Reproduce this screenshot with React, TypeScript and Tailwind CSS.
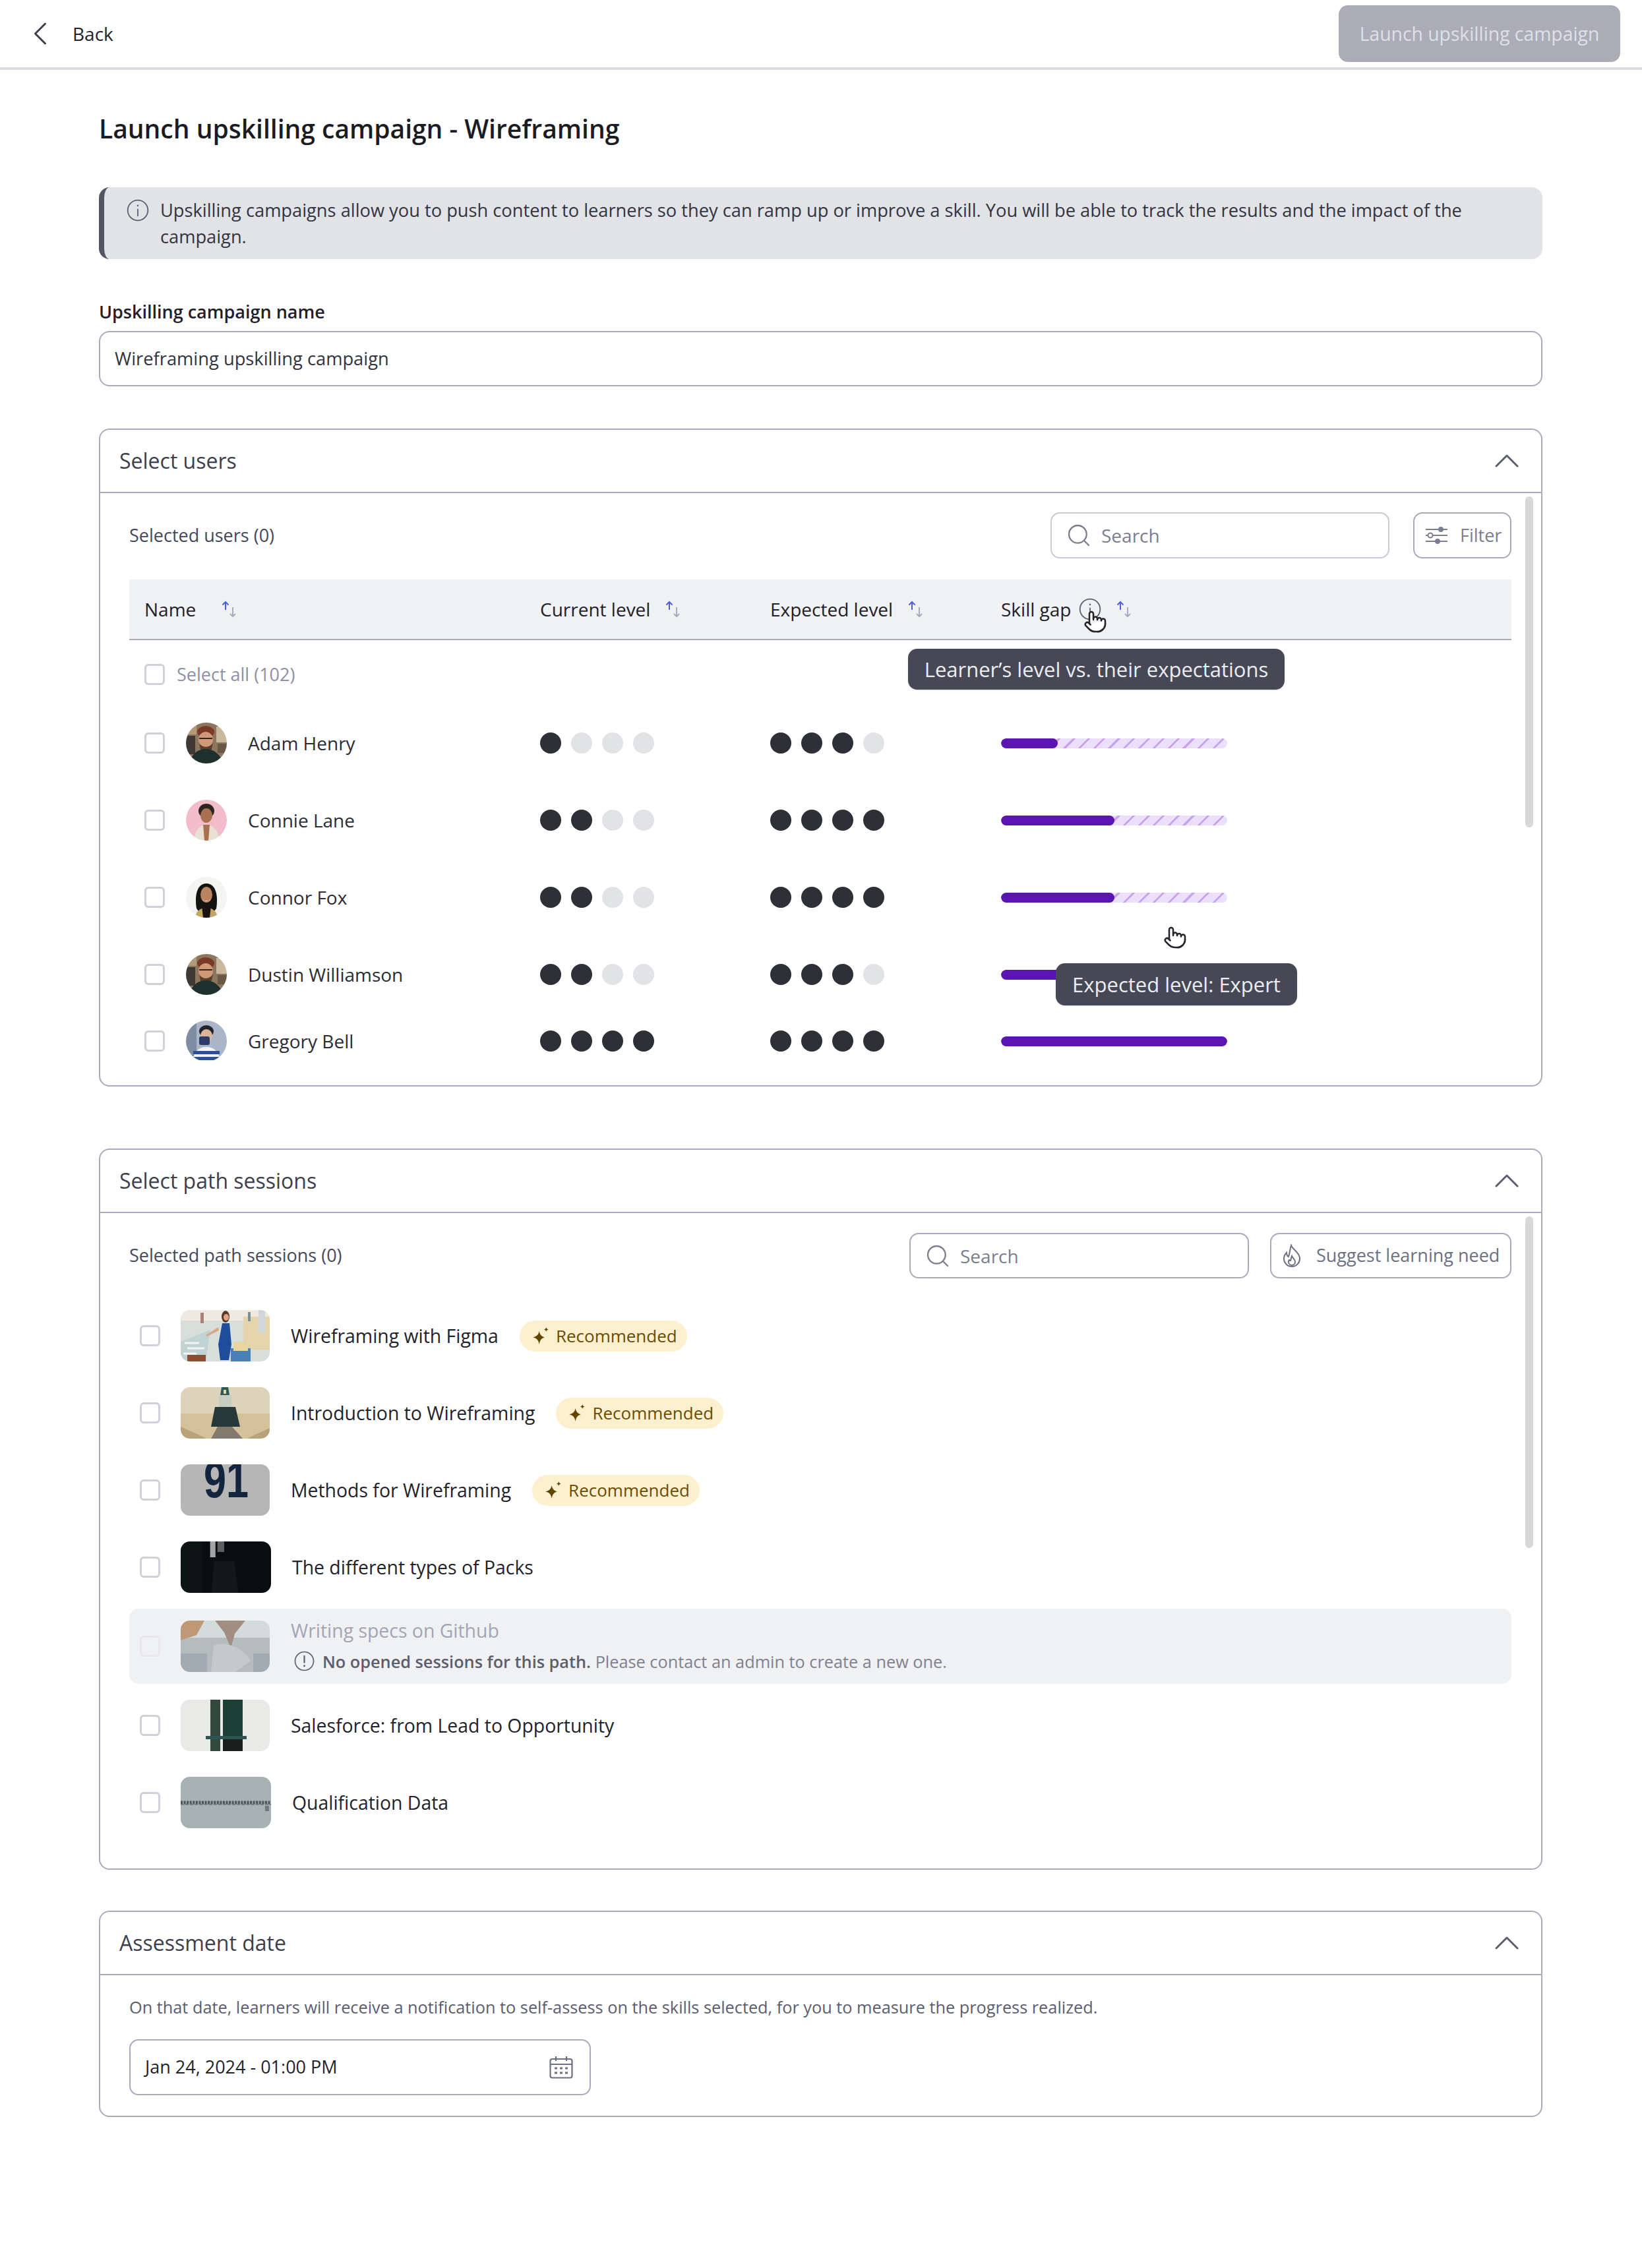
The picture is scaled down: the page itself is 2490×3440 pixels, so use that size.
import { ChevronLeft, ChevronUp, Pointer, Search } from 'lucide-react';

function InfoIcon({ className, mark = 'i' }: { className: string; mark?: 'i' | '!' }) {
  return (
    <svg viewBox="0 0 24 24" fill="none" stroke="currentColor" strokeWidth="1.2" strokeLinecap="round" className={className}>
      <circle cx="12" cy="12" r="10.2" />
      {mark === 'i' ? (
        <>
          <path d="M12 11v6.5" />
          <path d="M12 7.200v.2" strokeWidth="1.600" />
        </>
      ) : (
        <>
          <path d="M12 6.500v7" strokeWidth="1.600" />
          <path d="M12 17.200v.2" strokeWidth="2" />
        </>
      )}
    </svg>
  );
}

function SortIcon() {
  return (
    <svg viewBox="0 0 25 26" fill="none" strokeWidth="2" className="h-[26px] w-[25px] shrink-0">
      <path d="M7 14V2M2.500 6.500 7 2l4.500 4.500" stroke="#4a62d8" />
      <path d="M18 10v14M14 20l4 4 4-4" stroke="#a9abbd" />
    </svg>
  );
}

function FilterIcon() {
  return (
    <svg viewBox="0 0 34 30" fill="none" stroke="#7c7e90" strokeWidth="2" className="h-[30px] w-[34px] shrink-0">
      <path d="M1 6h33M1 15h33M1 24h33" />
      <circle cx="24" cy="6" r="3" fill="#7c7e90" />
      <circle cx="8" cy="15" r="3.500" fill="#fff" />
      <circle cx="19" cy="24" r="3" fill="#7c7e90" />
    </svg>
  );
}

function FlameIcon() {
  return (
    <svg viewBox="0 0 28 36" fill="none" stroke="#6d6f82" strokeWidth="2" strokeLinecap="round" className="h-[36px] w-[28px] shrink-0">
      <path d="M13 2c1 5 12 10 13 19a12 12 0 0 1-12 13A12 12 0 0 1 2 22c0-4 2-7 4-9 0 3 1 5 3 6 2-5 2-11 4-17Z" />
      <path d="M14 18c1 3 5 5 5 9a5 5 0 0 1-10 0c0-1 0-2 1-3 1 1 2 1 2 1 1-2 1-5 2-7Z" />
    </svg>
  );
}

function SparkleIcon() {
  return (
    <svg viewBox="1 0 22 22" fill="#5f4500" className="h-[26px] w-[26px] shrink-0">
      <path d="M10 5c.8 4 2.600 6.600 7 8-4.400 1.400-6.200 4-7 9-.8-5-2.600-7.600-8-9 5.400-1.400 7.200-4 8-8Z" />
      <path d="M19 0c.3 1.700 1 2.500 3 3-2 .5-2.700 1.300-3 3-.3-1.700-1-2.500-3-3 2-.5 2.700-1.300 3-3Z" />
    </svg>
  );
}

function CalendarIcon() {
  return (
    <svg viewBox="0 0 36 34" fill="none" stroke="#6d6f82" strokeWidth="2.200" className="h-[34px] w-[36px] shrink-0">
      <rect x="1.500" y="4" width="33" height="28.500" rx="3" />
      <path d="M1.500 12h33M10 0v7M26 0v7" />
      <path d="M8 18h4M16 18h4M24 18h4M8 25h4M16 25h4M24 25h4" strokeWidth="3" />
    </svg>
  );
}

function Checkbox({ faded = false }: { faded?: boolean }) {
  return (
    <span className={`block h-[32px] w-[31px] shrink-0 rounded-[6px] border-[3px] ${faded ? 'border-[#e7e7ec] bg-transparent' : 'border-[#cfd0da] bg-white'}`} />
  );
}

function Hand({ className }: { className: string }) {
  return (
    <span className={`absolute ${className}`}>
      <Pointer size={36} fill="#ffffff" stroke="#24252c" strokeWidth={1.7} />
    </span>
  );
}

function Tooltip({ text, className }: { text: string; className: string }) {
  return (
    <div className={`absolute flex items-center justify-center rounded-[14px] bg-[#464856] text-[31px] text-[#ecedf0] shadow-sm ${className}`}>
      {text}
    </div>
  );
}

function Section({ title, children }: { title: string; children: React.ReactNode }) {
  return (
    <section className="relative rounded-[16px] border-2 border-[#a9abbd]">
      <div className="flex h-[96px] items-center justify-between border-b-2 border-[#a9abbd] pl-[29px] pr-[20px]">
        <h2 className="text-[32px] font-medium text-[#3d3f4d]">{title}</h2>
        <ChevronUp size={64} strokeWidth={1.1} color="#5c5e70" />
      </div>
      {children}
    </section>
  );
}

function Avatar({ kind }: { kind: 'adam' | 'connie' | 'connor' | 'gregory' }) {
  const shapes = {
    adam: (
      <>
        <rect width="62" height="62" fill="#8c7660" />
        <rect x="0" y="20" width="14" height="28" fill="#3e3a33" />
        <rect x="46" y="6" width="16" height="24" fill="#c9b89d" />
        <rect x="4" y="4" width="12" height="14" fill="#b59a78" />
        <rect x="48" y="32" width="14" height="14" fill="#6a5846" />
        <ellipse cx="30" cy="14" rx="13" ry="9" fill="#7a3a26" />
        <ellipse cx="30" cy="26" rx="11" ry="12" fill="#d09a78" />
        <path d="M20 24h20" stroke="#33261f" strokeWidth="2" />
        <path d="M20 30c3 9 17 9 21 0l-2 11H22Z" fill="#5b3e2c" />
        <path d="M6 62c2-16 14-22 24-22s22 6 26 22Z" fill="#1f2f2b" />
      </>
    ),
    connie: (
      <>
        <rect width="62" height="62" fill="#f3bccb" />
        <ellipse cx="31" cy="17" rx="12" ry="11" fill="#2f2520" />
        <ellipse cx="31" cy="24" rx="9" ry="11" fill="#a8704f" />
        <path d="M12 62c1-16 9-24 19-24s18 8 20 24Z" fill="#e8e0d2" />
        <path d="M26 38h10l-2 24h-6Z" fill="#a8704f" />
      </>
    ),
    connor: (
      <>
        <rect width="62" height="62" fill="#f4f4f3" />
        <path d="M16 48c-3-18 0-38 15-38s18 20 15 38l-6 8H22Z" fill="#15130f" />
        <ellipse cx="31" cy="27" rx="9" ry="12" fill="#b9835f" />
        <path d="M24 33c3 5 11 5 14 0l-2 3h-10Z" fill="#f7f3ee" />
        <path d="M14 62c1-8 5-12 10-14h14c5 2 9 6 10 14Z" fill="#c2a763" />
        <path d="M24 44h14l-2 18H26Z" fill="#17140f" />
      </>
    ),
    gregory: (
      <>
        <rect width="62" height="62" fill="#aab5c8" />
        <rect x="0" y="0" width="16" height="62" fill="#7f8ca3" />
        <ellipse cx="31" cy="16" rx="11" ry="9" fill="#23252e" />
        <ellipse cx="31" cy="23" rx="9" ry="10" fill="#dbb49a" />
        <rect x="20" y="24" width="16" height="13" rx="3" fill="#2b3a66" />
        <path d="M10 62c1-14 9-22 21-22s20 8 21 22Z" fill="#f2f3f6" />
        <path d="M11 46h40v5H11ZM10 55h42v5H10Z" fill="#2a4f9c" />
      </>
    ),
  };
  return (
    <span className="block h-[62px] w-[62px] shrink-0 overflow-hidden rounded-full">
      <svg viewBox="0 0 62 62" className="h-full w-full blur-[0.6px]">
        {shapes[kind]}
      </svg>
    </span>
  );
}

function Dots({ filled }: { filled: number }) {
  return (
    <div className="flex gap-[15px]">
      {[0, 1, 2, 3].map((i) => (
        <span key={i} className={`h-[32px] w-[32px] rounded-full ${i < filled ? 'bg-[#2e3038]' : 'bg-[#e2e3e7]'}`} />
      ))}
    </div>
  );
}

function SkillBar({ percent }: { percent: number }) {
  return (
    <div className="h-[15px] w-[343px] overflow-hidden rounded-full bg-[repeating-linear-gradient(135deg,#ecdffb_0,#ecdffb_13px,#c6a4ee_13px,#c6a4ee_16px)]">
      <div className="h-full rounded-full bg-[#5a14b0]" style={{ width: `${percent}%` }} />
    </div>
  );
}

const users = [
  { name: 'Adam Henry', avatar: 'adam', current: 1, expected: 3, gap: 25 },
  { name: 'Connie Lane', avatar: 'connie', current: 2, expected: 4, gap: 50 },
  { name: 'Connor Fox', avatar: 'connor', current: 2, expected: 4, gap: 50 },
  { name: 'Dustin Williamson', avatar: 'adam', current: 2, expected: 3, gap: 50 },
  { name: 'Gregory Bell', avatar: 'gregory', current: 4, expected: 4, gap: 100 },
] as const;

function HeaderCell({ label, children }: { label: string; children?: React.ReactNode }) {
  return (
    <div className="flex items-center gap-[22px] text-[28px] font-medium text-[#1f2029]">
      <span>{label}</span>
      {children}
    </div>
  );
}

function UsersTable() {
  return (
    <div className="relative mt-[31px]">
      <div className="grid h-[92px] grid-cols-[600px_349px_350px_1fr] items-center border-b-2 border-[#a9abbd] bg-[#f0f1f3] pl-[23px]">
        <div className="flex items-center gap-[38px] text-[28px] font-medium text-[#1f2029]">
          <span>Name</span>
          <SortIcon />
        </div>
        <HeaderCell label="Current level">
          <SortIcon />
        </HeaderCell>
        <HeaderCell label="Expected level">
          <SortIcon />
        </HeaderCell>
        <div className="flex items-center text-[28px] font-medium text-[#1f2029]">
          <span>Skill gap</span>
          <InfoIcon className="ml-[11px] mr-[21px] h-[36px] w-[36px] text-[#5c5e70]" />
          <SortIcon />
        </div>
      </div>
      <div className="flex h-[104px] items-center gap-[18px] pl-[23px] text-[27px] text-[#8e90a3]">
        <Checkbox />
        <span>Select all (102)</span>
      </div>
      <div className="flex flex-col gap-[13px]">
        {users.map((user, i) => (
          <div
            key={user.name}
            className={`grid grid-cols-[600px_349px_350px_1fr] items-center pl-[23px] ${i === 4 ? 'h-[72px]' : 'h-[104px]'}`}
          >
            <div className="flex items-center text-[28px] font-medium text-[#2b2d36]">
              <Checkbox />
              <span className="ml-[32px] mr-[32px]">
                <Avatar kind={user.avatar} />
              </span>
              <span>{user.name}</span>
            </div>
            <Dots filled={user.current} />
            <Dots filled={user.expected} />
            <SkillBar percent={user.gap} />
          </div>
        ))}
      </div>
      <Tooltip text="Learner’s level vs. their expectations" className="left-[1181px] top-[105px] h-[62px] w-[571px]" />
      <Tooltip text="Expected level: Expert" className="left-[1405px] top-[582px] h-[64px] w-[366px]" />
      <Hand className="left-[1447px] top-[46px]" />
      <Hand className="left-[1568px] top-[525px]" />
    </div>
  );
}

function Thumb({ children, wide = false }: { children: React.ReactNode; wide?: boolean }) {
  return (
    <span className={`block h-[78px] shrink-0 overflow-hidden rounded-[14px] ${wide ? 'w-[137px]' : 'w-[135px]'}`}>
      <svg viewBox="0 0 135 78" preserveAspectRatio="none" className="h-full w-full blur-[0.7px]">
        {children}
      </svg>
    </span>
  );
}

const sessions = [
  {
    title: 'Wireframing with Figma',
    recommended: true,
    thumb: (
      <>
        <rect width="135" height="78" fill="#d8dfda" />
        <rect width="135" height="16" fill="#efe9df" />
        <rect x="95" y="10" width="40" height="50" fill="#e6d3ac" />
        <path d="M0 48 45 30 38 78H0Z" fill="#c2d3d3" />
        <path d="M6 50h22M10 58h26M4 66h20" stroke="#f2f4f2" strokeWidth="3" />
        <rect x="30" y="4" width="5" height="16" fill="#a9817a" />
        <rect x="102" y="3" width="4" height="14" fill="#7d8f96" />
        <rect x="118" y="0" width="10" height="34" fill="#cfd6da" />
        <ellipse cx="68" cy="10" rx="6" ry="9" fill="#5b3826" />
        <ellipse cx="69" cy="11" rx="4" ry="5" fill="#d9a68a" />
        <path d="M63 20h11l3 32-4 24H60l-3-24Z" fill="#1f4d9e" />
        <path d="M57 26 38 38l2 2 18-9Z" fill="#d9a68a" />
        <path d="M76 58h30v20H76Z" fill="#4a7fb8" />
        <path d="M80 48h22v14H80Z" fill="#e9d5a0" />
        <path d="M10 68h28v10H10Z" fill="#8e4c32" />
      </>
    ),
  },
  {
    title: 'Introduction to Wireframing',
    recommended: true,
    thumb: (
      <>
        <rect width="135" height="78" fill="#ddd2ba" />
        <path d="M0 40h135v38H0Z" fill="#d3c19b" />
        <path d="M0 60 40 78H0ZM135 62 100 78h35Z" fill="#b9a27a" />
        <path d="M62 0h10l2 12H60Z" fill="#2c5a58" />
        <rect x="58" y="12" width="19" height="18" fill="#c7cdbf" />
        <path d="M52 30h31l7 30H46Z" fill="#27383a" />
        <path d="M56 60h22l16 18H46Z" fill="#827a6c" />
        <rect x="65" y="4" width="4" height="6" fill="#e9d49a" />
      </>
    ),
  },
  {
    title: 'Methods for Wireframing',
    recommended: true,
    thumb: (
      <>
        <rect width="135" height="78" fill="#b6b6b7" />
        <text x="35" y="50" textLength="68" lengthAdjust="spacingAndGlyphs" fontFamily="'Liberation Sans', sans-serif" fontWeight="700" fontSize="78" fill="#13243f">91</text>
      </>
    ),
  },
  {
    title: 'The different types of Packs',
    wide: true,
    thumb: (
      <>
        <rect width="135" height="78" fill="#0a0d0f" />
        <rect x="44" y="0" width="8" height="24" fill="#a2a6a6" />
        <rect x="55" y="0" width="10" height="16" fill="#5c6060" />
        <path d="M50 30h30l6 48H46Z" fill="#15181b" />
        <path d="M0 0h32v78H0Z" fill="#0d1416" />
      </>
    ),
  },
  {
    title: 'Writing specs on Github',
    disabled: true,
    thumb: (
      <>
        <rect width="135" height="78" fill="#a7b0b2" />
        <rect width="135" height="26" fill="#ccd6d6" />
        <path d="M0 0h36L24 22 0 30Z" fill="#b38458" />
        <path d="M52 0h46L82 20l-6 22-10-24Z" fill="#8f7566" />
        <path d="M50 38c20-8 46 4 56 24l-24 16H46Z" fill="#bcbfbf" />
        <path d="M0 50h40v28H0ZM110 50h25v28h-25Z" fill="#8e9aa1" />
      </>
    ),
  },
  {
    title: 'Salesforce: from Lead to Opportunity',
    thumb: (
      <>
        <rect width="135" height="78" fill="#e9e9e7" />
        <rect x="45" y="0" width="15" height="78" fill="#33483f" />
        <rect x="64" y="0" width="30" height="78" fill="#1c3f36" />
        <rect x="38" y="55" width="62" height="5" fill="#2b5654" />
        <path d="M64 60h30v18H64Z" fill="#1a1f1d" />
      </>
    ),
  },
  {
    title: 'Qualification Data',
    wide: true,
    thumb: (
      <>
        <rect width="137" height="78" fill="#a6b2b4" />
        <path d="M0 39h135" stroke="#4e5557" strokeWidth="5" strokeDasharray="3 1.500" />
        <path d="M0 42h135" stroke="#757e80" strokeWidth="2" strokeDasharray="5 2" />
        <rect x="126" y="44" width="6" height="8" fill="#6f7a7c" />
      </>
    ),
  },
];

function Recommended() {
  return (
    <span className="flex h-[47px] w-[254px] shrink-0 items-center gap-[10px] rounded-full bg-[#fdf0cf] pl-[19px] text-[26px] font-medium text-[#6a4c00]">
      <SparkleIcon />
      Recommended
    </span>
  );
}

function SessionRow({ session }: { session: (typeof sessions)[number] }) {
  if (session.disabled) {
    return (
      <div className="-my-[15px] flex h-[114px] items-center rounded-[14px] bg-[#f0f1f3] pl-[16px]">
        <Checkbox faded />
        <span className="ml-[31px] mr-[32px] opacity-80">
          <Thumb>{session.thumb}</Thumb>
        </span>
        <div className="pb-[4px]">
          <div className="text-[28.400px] font-medium leading-[40px] text-[#a3a5b5]">{session.title}</div>
          <div className="mt-[9px] flex items-center gap-[11px] text-[25.300px] leading-[36px] text-[#7f8190]">
            <InfoIcon className="ml-[4px] h-[33px] w-[33px] text-[#5c5e70]" mark="!" />
            <span>
              <span className="font-semibold text-[#5c5e6e]">No opened sessions for this path.</span> Please contact an admin to create a new one.
            </span>
          </div>
        </div>
      </div>
    );
  }
  return (
    <div className="flex h-[78px] items-center pl-[16px]">
      <Checkbox />
      <span className="ml-[31px] mr-[32px]">
        <Thumb wide={session.wide}>{session.thumb}</Thumb>
      </span>
      <span className="mr-[32px] text-[28.400px] font-medium text-[#22232c]">{session.title}</span>
      {session.recommended && <Recommended />}
    </div>
  );
}

export default function App() {
  return (
    <div className="min-h-[3440px] bg-white font-['Open_Sans',sans-serif]">
      <header className="flex h-[106px] items-center justify-between border-b-4 border-[#dcdde3] pl-[31px] pr-[33px]">
        <div className="flex items-center gap-[19px] text-[28px] font-medium text-[#22232c]">
          <ChevronLeft size={60} strokeWidth={1.2} color="#3d3f4d" />
          Back
        </div>
        <button className="h-[86px] w-[427px] rounded-[14px] bg-[#abacb8] text-[28.300px] font-medium text-[#dfe0e6]">
          Launch upskilling campaign
        </button>
      </header>

      <main className="pl-[150px] pr-[151px] pt-[59px]">
        <h1 className="h-[60px] text-[39px] font-semibold leading-[60px] text-[#1b1c23]">Launch upskilling campaign - Wireframing</h1>

        <div className="mt-[59px] flex h-[109px] gap-[16px] rounded-[16px] border-l-[8px] border-[#545664] bg-[#e2e3e7] pl-[33px] pr-[100px] pt-[15px]">
          <InfoIcon className="mt-[2px] h-[36px] w-[36px] shrink-0 text-[#5c5e70]" />
          <p className="text-[27.250px] leading-[40px] text-[#32343f]">
            Upskilling campaigns allow you to push content to learners so they can ramp up or improve a skill. You will be able to track the results and the impact of the campaign.
          </p>
        </div>

        <label className="mt-[60px] block h-[40px] text-[27px] font-semibold leading-[40px] text-[#1f2029]">Upskilling campaign name</label>
        <div className="mt-[9px] flex h-[84px] items-center rounded-[16px] border-2 border-[#a9abbd] pl-[22px] text-[27.300px] text-[#32343f]">
          Wireframing upskilling campaign
        </div>

        <div className="mt-[64px]">
          <Section title="Select users">
            <div className="h-[898px] overflow-hidden pl-[44px] pr-[45px] pt-[29px]">
              <div className="flex h-[70px] items-center justify-between">
                <span className="text-[27px] text-[#45475a]">Selected users (0)</span>
                <div className="flex gap-[36px]">
                  <div className="flex h-[70px] w-[514px] items-center gap-[14px] rounded-[14px] border-2 border-[#c9cad5] pl-[21px] text-[28px] text-[#7c7e90]">
                    <Search size={40} strokeWidth={1.4} color="#7c7e90" />
                    Search
                  </div>
                  <div className="flex h-[70px] w-[149px] items-center gap-[19px] rounded-[14px] border-2 border-[#a9abbd] pl-[16px] text-[27px] text-[#7c7e90]">
                    <FilterIcon />
                    Filter
                  </div>
                </div>
              </div>
              <div className="pt-[1px]">
                <UsersTable />
              </div>
            </div>
            <div className="absolute right-[12px] top-[101px] h-[502px] w-[12px] rounded-full bg-[#d8d8d8]" />
          </Section>
        </div>

        <div className="mt-[94px]">
          <Section title="Select path sessions">
            <div className="h-[994px] overflow-hidden pl-[44px] pr-[45px] pt-[30px]">
              <div className="flex h-[69px] items-center justify-between">
                <span className="text-[27px] text-[#45475a]">Selected path sessions (0)</span>
                <div className="flex gap-[32px]">
                  <div className="flex h-[69px] w-[515px] items-center gap-[14px] rounded-[14px] border-2 border-[#a9abbd] pl-[21px] text-[28px] text-[#7c7e90]">
                    <Search size={40} strokeWidth={1.4} color="#7c7e90" />
                    Search
                  </div>
                  <div className="flex h-[69px] w-[366px] items-center gap-[23px] rounded-[14px] border-2 border-[#a9abbd] pl-[17px] text-[27px] text-[#6d6f82]">
                    <FlameIcon />
                    Suggest learning need
                  </div>
                </div>
              </div>
              <div className="mt-[48px] flex flex-col gap-[39px]">
                {sessions.map((session) => (
                  <SessionRow key={session.title} session={session} />
                ))}
              </div>
            </div>
            <div className="absolute right-[12px] top-[101px] h-[503px] w-[12px] rounded-full bg-[#d8d8d8]" />
          </Section>
        </div>

        <div className="mt-[62px]">
          <Section title="Assessment date">
            <div className="pb-[31px] pl-[44px] pt-[28px]">
              <p className="text-[25.300px] leading-[40px] text-[#5c5e70]">
                On that date, learners will receive a notification to self-assess on the skills selected, for you to measure the progress realized.
              </p>
              <div className="mt-[29px] flex h-[85px] w-[700px] items-center justify-between rounded-[14px] border-2 border-[#a9abbd] pl-[22px] pr-[25px] text-[27px] text-[#22232c]">
                Jan 24, 2024 - 01:00 PM
                <CalendarIcon />
              </div>
            </div>
          </Section>
        </div>
      </main>
    </div>
  );
}
